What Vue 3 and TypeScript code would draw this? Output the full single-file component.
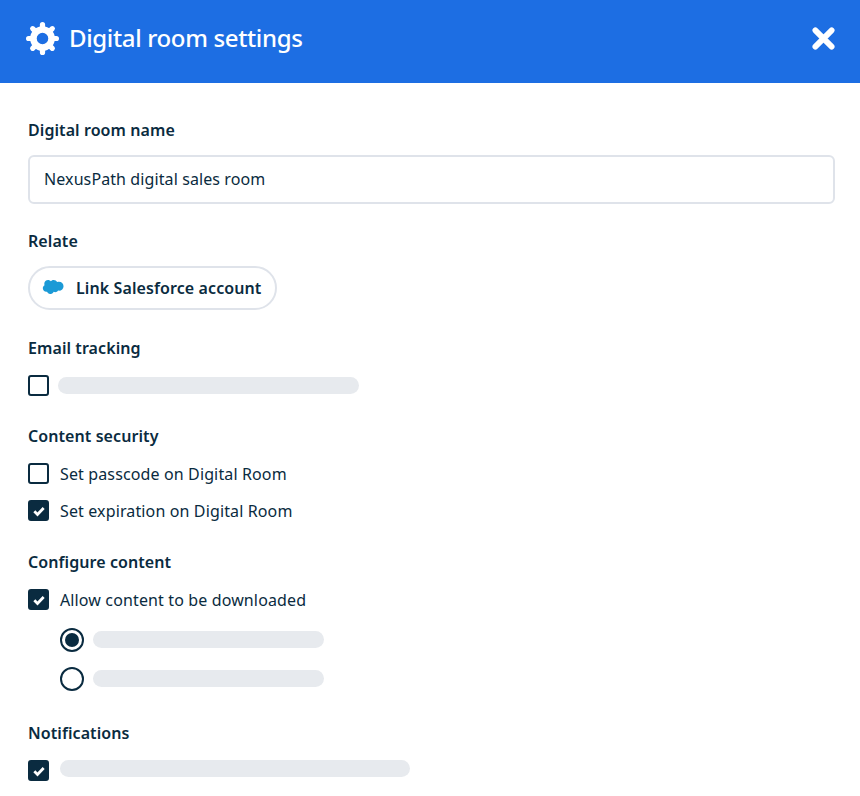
<script setup lang="ts">
import { reactive } from 'vue'

const state = reactive({
  name: 'NexusPath digital sales room',
  passcode: false,
  expiration: true,
})

// Gear teeth, one every 45 degrees
const teeth = [0, 45, 90, 135, 180, 225, 270, 315]
</script>

<template>
  <div class="dialog">
    <header class="head">
      <svg class="gear" viewBox="0 0 24 24" aria-hidden="true">
        <circle cx="12" cy="12" r="6.600" fill="none" stroke="#fff" stroke-width="4.800" />
        <line
          v-for="deg in teeth"
          :key="deg"
          x1="12"
          y1="4"
          x2="12"
          y2="1.900"
          stroke="#fff"
          stroke-width="3.800"
          stroke-linecap="round"
          :transform="`rotate(${deg} 12 12)`"
        />
      </svg>
      <h1 class="title">Digital room settings</h1>
      <svg class="close" viewBox="0 0 24 24" aria-hidden="true">
        <path d="M3.500 3.500l17 17M20.500 3.500l-17 17" stroke="#fff" stroke-width="6" stroke-linecap="round" />
      </svg>
    </header>

    <main class="body">
      <section class="group first">
        <label class="label">Digital room name</label>
        <input v-model="state.name" class="text-input" />
      </section>

      <section class="group relate">
        <div class="label">Relate</div>
        <button class="link-btn">
          <svg class="cloud" viewBox="0 0 24 16" aria-hidden="true">
            <path
              fill="#1b9ad6"
              d="M9.700 2.300C10.500 1.400 11.600.9 12.800.9c1.600 0 3 .9 3.700 2.200.7-.3 1.300-.4 2-.4 2.800 0 5 2.200 5 4.900s-2.200 4.900-5 4.900c-.3 0-.7 0-1-.1-.6 1.100-1.800 1.800-3.100 1.800-.6 0-1.100-.1-1.600-.4-.6 1.500-2 2.400-3.600 2.400-1.700 0-3.100-1-3.700-2.500-.2 0-.5.100-.8.100-2.100 0-3.800-1.700-3.800-3.800 0-1.400.8-2.600 1.900-3.300-.2-.5-.3-1-.3-1.600C2.500 2.600 4.400.8 6.700.8c1.200 0 2.300.6 3 1.500z"
            />
          </svg>
          <span>Link Salesforce account</span>
        </button>
      </section>

      <section class="group tracking">
        <div class="label">Email tracking</div>
        <div class="row">
          <span class="box"></span>
          <span class="bar bar-wide"></span>
        </div>
      </section>

      <section class="group security">
        <div class="label">Content security</div>
        <div class="row row-text">
          <span class="box"></span>
          <span>Set passcode on Digital Room</span>
        </div>
        <div class="row row-text">
          <span class="box checked">
            <svg viewBox="0 0 12 12" aria-hidden="true"><path d="M2 6.300l2.700 2.700L10 3.400" /></svg>
          </span>
          <span>Set expiration on Digital Room</span>
        </div>
      </section>

      <section class="group configure">
        <div class="label">Configure content</div>
        <div class="row row-text">
          <span class="box checked">
            <svg viewBox="0 0 12 12" aria-hidden="true"><path d="M2 6.300l2.700 2.700L10 3.400" /></svg>
          </span>
          <span>Allow content to be downloaded</span>
        </div>
        <div class="radios">
          <div class="radio-row">
            <span class="radio on"></span>
            <span class="bar bar-short"></span>
          </div>
          <div class="radio-row">
            <span class="radio"></span>
            <span class="bar bar-short"></span>
          </div>
        </div>
      </section>

      <section class="group notify">
        <div class="label">Notifications</div>
        <div class="row">
          <span class="box checked">
            <svg viewBox="0 0 12 12" aria-hidden="true"><path d="M2 6.300l2.700 2.700L10 3.400" /></svg>
          </span>
          <span class="bar bar-notify"></span>
        </div>
      </section>
    </main>
  </div>
</template>

<style>
html,
body {
  margin: 0;
  background: #fff;
}
</style>

<style scoped>
.dialog {
  width: 860px;
  height: 796px;
  overflow: hidden;
  background: #fff;
  color: #0a2b40;
  font-family: "Noto Sans", "Open Sans", sans-serif;
}

.head {
  display: flex;
  align-items: center;
  height: 83px;
  padding: 0 25px 7px 26px;
  box-sizing: border-box;
  background: #1d6ee3;
  color: #fff;
}
.gear {
  width: 33px;
  height: 33px;
}
.title {
  flex: 1;
  margin: 0 0 0 10px;
  font-size: 24px;
  font-weight: 500;
  line-height: 32px;
  letter-spacing: -0.35px;
}
.close {
  width: 23px;
  height: 23px;
}

.body {
  padding: 0 25px 0 28px;
}
.group {
  display: flex;
  flex-direction: column;
  align-items: flex-start;
}
.first {
  padding-top: 36px;
}
.relate {
  margin-top: 26px;
}
.tracking {
  margin-top: 27px;
}
.security {
  margin-top: 29px;
}
.configure {
  margin-top: 30px;
}
.notify {
  margin-top: 31px;
}

.label {
  font-size: 16px;
  font-weight: 600;
  line-height: 22px;
  letter-spacing: 0.08px;
}

.text-input {
  box-sizing: border-box;
  width: 807px;
  height: 49px;
  margin-top: 14px;
  padding: 0 14px 2px;
  border: 2px solid #dfe3ea;
  border-radius: 6px;
  background: #fff;
  color: #0a2b40;
  font: 400 16px "Noto Sans", "Open Sans", sans-serif;
  letter-spacing: 0.1px;
  outline: none;
}

.link-btn {
  display: flex;
  align-items: center;
  gap: 12px;
  box-sizing: border-box;
  width: 249px;
  height: 44px;
  margin-top: 14px;
  padding: 0 12px;
  border: 2px solid #dfe3ea;
  border-radius: 22px;
  background: #fff;
  color: #0a2b40;
  font: 600 16px "Noto Sans", "Open Sans", sans-serif;
  letter-spacing: 0.1px;
  white-space: nowrap;
}
.cloud {
  width: 22px;
  height: 15px;
  flex: none;
  margin-bottom: 4px;
}

.row {
  display: flex;
  align-items: center;
  gap: 9px;
  margin-top: 16px;
  height: 21px;
}
.row-text {
  gap: 11px;
  font-size: 16px;
  line-height: 22px;
  letter-spacing: 0.13px;
}

.box {
  display: flex;
  align-items: center;
  justify-content: center;
  box-sizing: border-box;
  width: 21px;
  height: 21px;
  flex: none;
  border: 2px solid #0a2b40;
  border-radius: 3px;
}
.box.checked {
  background: #0a2b40;
}
.box svg {
  width: 14px;
  height: 14px;
}
.box path {
  fill: none;
  stroke: #fff;
  stroke-width: 2.400;
}

.bar {
  display: block;
  height: 17px;
  border-radius: 9px;
  background: #e7eaee;
}
.bar-wide {
  width: 301px;
}
.bar-short {
  width: 231px;
  margin-bottom: 2px;
}
.bar-notify {
  width: 350px;
  margin-left: 2px;
  margin-bottom: 5px;
}

.radios {
  display: flex;
  flex-direction: column;
  gap: 15px;
  margin-top: 18px;
  margin-left: 32px;
}
.radio-row {
  display: flex;
  align-items: center;
  gap: 9px;
  height: 24px;
}
.radio {
  position: relative;
  box-sizing: border-box;
  width: 24px;
  height: 24px;
  flex: none;
  border: 2px solid #0a2b40;
  border-radius: 50%;
}
.radio.on::after {
  content: "";
  position: absolute;
  inset: 3px;
  border-radius: 50%;
  background: #0a2b40;
}
</style>
